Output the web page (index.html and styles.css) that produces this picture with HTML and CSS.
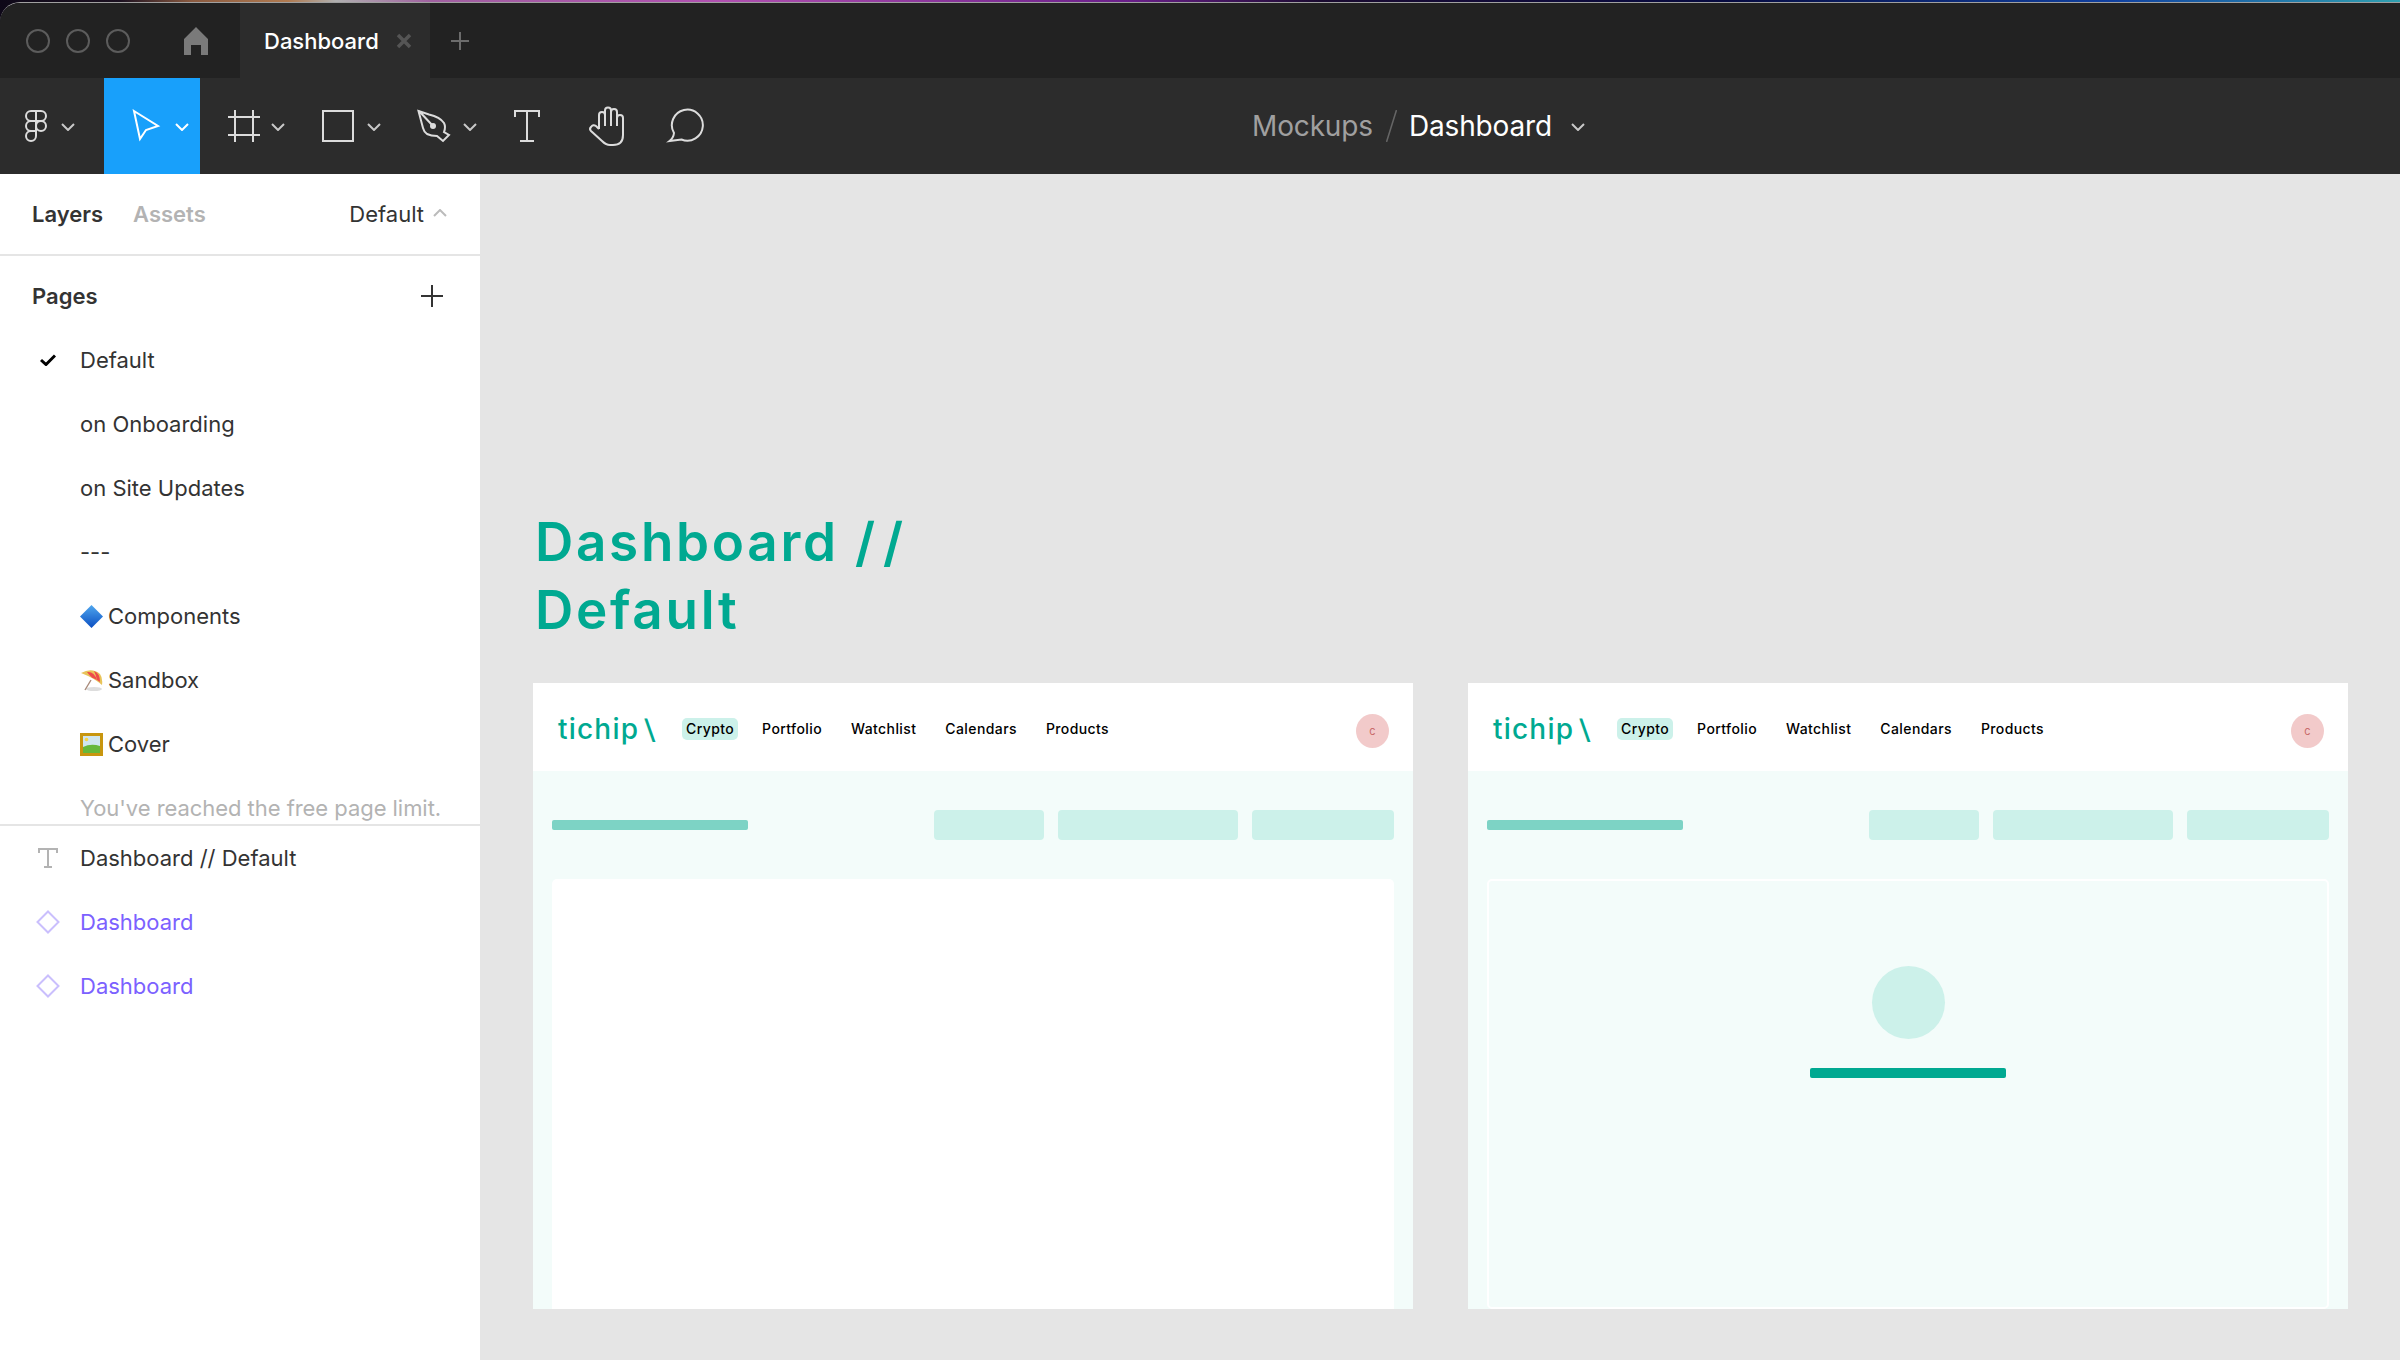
FILE: index.html
```html
<!DOCTYPE html>
<html lang="en">
<head>
    <meta charset="UTF-8">
    <title>Dashboard</title>
    <link rel="stylesheet" href="styles.css">
</head>
<body>
    <div class="app">
        <div class="tabbar">
            <div class="traffic"><span></span><span></span><span></span></div>
            <svg class="home" width="24" height="28" viewBox="0 0 24 28"><path d="M12 0 L24 12 V28 H17 V18 H7 V28 H0 V12 Z"/></svg>
            <div class="tab">
                <span class="tab-name">Dashboard</span>
                <svg class="tab-close" width="16" height="16" viewBox="0 0 16 16"><path d="M2 2 L14 14 M14 2 L2 14"/></svg>
            </div>
            <svg class="tab-add" width="18" height="18" viewBox="0 0 18 18"><path d="M9 0 V18 M0 9 H18"/></svg>
        </div>

        <div class="toolbar">
            <div class="tool-menu">
                <svg class="ico" width="22" height="32" viewBox="0 0 22 32">
                    <path d="M11 1 H6 a5 5 0 0 0 0 10 H11 Z M11 1 H16 a5 5 0 0 1 0 10 H11 M11 11 H6 a5 5 0 0 0 0 10 H11 Z M6 21 H11 V26 a5 5 0 1 1 -5 -5 Z"/>
                    <circle cx="16" cy="16" r="5"/>
                </svg>
                <svg class="chev" width="14" height="8" viewBox="0 0 14 8"><path d="M1 1 L7 7 L13 1"/></svg>
            </div>
            <div class="tool-select">
                <svg class="ico" width="30" height="34" viewBox="0 0 30 34"><path d="M3 2 L27 17 L15 21 L9 30 Z"/></svg>
                <svg class="chev" width="14" height="8" viewBox="0 0 14 8"><path d="M1 1 L7 7 L13 1"/></svg>
            </div>
            <div class="tool">
                <svg class="ico" width="40" height="40" viewBox="0 0 40 40"><path d="M11 4 V36 M29 4 V36 M4 11 H36 M4 29 H36"/></svg>
                <svg class="chev" width="14" height="8" viewBox="0 0 14 8"><path d="M1 1 L7 7 L13 1"/></svg>
            </div>
            <div class="tool">
                <svg class="ico" width="40" height="40" viewBox="0 0 40 40"><rect x="3" y="5" width="30" height="30"/></svg>
                <svg class="chev" width="14" height="8" viewBox="0 0 14 8"><path d="M1 1 L7 7 L13 1"/></svg>
            </div>
            <div class="tool">
                <svg class="ico" width="40" height="40" viewBox="0 0 40 40">
                    <path d="M2.5 5 L13 8.5 Q24 11 28 17 Q30 21 28 26 L33 29 L27 35 L21 30 Q15 30 11 28 Q8 26 7 22 Z M3 5 L17 20"/>
                    <circle class="dot" cx="17" cy="20" r="3"/>
                </svg>
                <svg class="chev" width="14" height="8" viewBox="0 0 14 8"><path d="M1 1 L7 7 L13 1"/></svg>
            </div>
            <div class="tool-singles">
                <svg class="ico" width="40" height="40" viewBox="0 0 40 40"><path d="M7 11 V5 H31 V11 M19 5 V35 M12 35 H26"/></svg>
                <svg class="ico" width="40" height="40" viewBox="0 0 40 40"><path d="M12 23 V9 a3 3 0 0 1 6 0 V4.5 a3 3 0 0 1 6 0 V6 a3 3 0 0 1 6 0 V12 a3 3 0 0 1 6 0 V29 Q36 39 26 39 H23 Q19 39 15 35 L4 25 Q2 23 4 21 Q6 18 9 20 L12 23 M18 9 V20 M24 5 V20 M30 6 V20"/></svg>
                <svg class="ico" width="40" height="40" viewBox="0 0 40 40"><path d="M8 27 A15.5 15.5 0 1 1 15.5 33.5 L3.5 35 Q7.5 32 8 27 Z"/></svg>
            </div>
            <div class="crumbs">
                <span class="crumb-team">Mockups</span>
                <svg class="crumb-slash" width="11" height="32" viewBox="0 0 11 32"><path d="M10.5 0 L0.5 32"/></svg>
                <span class="crumb-file">Dashboard</span>
                <svg class="chev" width="14" height="8" viewBox="0 0 14 8"><path d="M1 1 L7 7 L13 1"/></svg>
            </div>
        </div>

        <div class="workspace">
            <aside class="sidebar">
                <div class="side-tabs">
                    <span class="side-tab">Layers</span>
                    <span class="side-tab muted">Assets</span>
                    <span class="side-page">Default</span>
                    <svg class="side-chev" width="14" height="8" viewBox="0 0 14 8"><path d="M1 7 L7 1 L13 7"/></svg>
                </div>
                <div class="pages">
                    <div class="pages-head">
                        <span>Pages</span>
                        <svg width="22" height="22" viewBox="0 0 22 22"><path d="M11 0 V22 M0 11 H22"/></svg>
                    </div>
                    <div class="row">
                        <span class="row-icon"><svg class="check" width="16" height="12" viewBox="0 0 16 12"><path d="M1 6 L6 10.5 L15 1.5"/></svg></span>
                        Default
                    </div>
                    <div class="row"><span class="row-icon"></span>on Onboarding</div>
                    <div class="row"><span class="row-icon"></span>on Site Updates</div>
                    <div class="row"><span class="row-icon"></span>---</div>
                    <div class="row">
                        <span class="row-icon"></span>
                        <svg class="emoji" width="23" height="23" viewBox="0 0 23 23">
                            <defs><linearGradient id="blue" x1="0" y1="0" x2="0" y2="1"><stop offset="0" stop-color="#4fa6ee"/><stop offset="1" stop-color="#0b4fc2"/></linearGradient></defs>
                            <path d="M11.5 0 L23 11.5 L11.5 23 L0 11.5 Z" fill="url(#blue)"/>
                        </svg>
                        Components
                    </div>
                    <div class="row">
                        <span class="row-icon"></span>
                        <svg class="emoji" width="23" height="23" viewBox="0 0 23 23">
                            <ellipse cx="14" cy="20" rx="8" ry="2" fill="#ddd"/>
                            <path d="M11 11 L5 21" stroke="#a98a7a" stroke-width="1.4"/>
                            <path d="M1 4 Q12 -2 20 5 Q23 9 22 16 Q14 9 1 4 Z" fill="#e8c45a"/>
                            <path d="M7 3 Q14 2 17 11 L12 8.5 Q9 6 7 3 Z" fill="#ee4b4b"/>
                            <path d="M14 2 Q20 4 20 13 L17 11 Q16 6 14 2 Z" fill="#ee4b4b"/>
                        </svg>
                        Sandbox
                    </div>
                    <div class="row">
                        <span class="row-icon"></span>
                        <svg class="emoji" width="23" height="23" viewBox="0 0 23 23">
                            <rect width="23" height="23" fill="#c8960f"/>
                            <rect x="3" y="3" width="17" height="17" fill="#cfe6ef"/>
                            <path d="M3 14 Q11 10 20 13 V20 H3 Z" fill="#66b83a"/>
                            <circle cx="6.5" cy="6.5" r="1.8" fill="#f6d64a"/>
                        </svg>
                        Cover
                    </div>
                    <div class="row limit"><span class="row-icon"></span>You've reached the free page limit.</div>
                </div>
                <div class="layers">
                    <div class="row">
                        <span class="row-icon"><svg class="type-ico" width="20" height="20" viewBox="0 0 20 20"><path d="M1 5 V1 H19 V5 M10 1 V19 M6 19 H14"/></svg></span>
                        Dashboard // Default
                    </div>
                    <div class="row comp">
                        <span class="row-icon"><svg class="comp-ico" width="24" height="24" viewBox="0 0 24 24"><path d="M12 1.5 L22.5 12 L12 22.5 L1.5 12 Z"/></svg></span>
                        Dashboard
                    </div>
                    <div class="row comp">
                        <span class="row-icon"><svg class="comp-ico" width="24" height="24" viewBox="0 0 24 24"><path d="M12 1.5 L22.5 12 L12 22.5 L1.5 12 Z"/></svg></span>
                        Dashboard
                    </div>
                </div>
            </aside>

            <main class="canvas">
                <h1 class="canvas-title">Dashboard <span class="title-slashes">//</span><br>Default</h1>
                <div class="frames">
                    <section class="frame">
                        <header class="frame-head">
                            <div class="logo"><span>tichip</span><span class="logo-slash">\</span></div>
                            <nav class="nav">
                                <a class="active">Crypto</a>
                                <a>Portfolio</a>
                                <a>Watchlist</a>
                                <a>Calendars</a>
                                <a>Products</a>
                            </nav>
                            <span class="avatar">c</span>
                        </header>
                        <div class="frame-body">
                            <div class="frame-tools">
                                <div class="bar bar-title"></div>
                                <div class="btn btn-s"></div>
                                <div class="btn btn-l"></div>
                                <div class="btn btn-m"></div>
                            </div>
                            <div class="card"></div>
                        </div>
                    </section>
                    <section class="frame">
                        <header class="frame-head">
                            <div class="logo"><span>tichip</span><span class="logo-slash">\</span></div>
                            <nav class="nav">
                                <a class="active">Crypto</a>
                                <a>Portfolio</a>
                                <a>Watchlist</a>
                                <a>Calendars</a>
                                <a>Products</a>
                            </nav>
                            <span class="avatar">c</span>
                        </header>
                        <div class="frame-body">
                            <div class="frame-tools">
                                <div class="bar bar-title"></div>
                                <div class="btn btn-s"></div>
                                <div class="btn btn-l"></div>
                                <div class="btn btn-m"></div>
                            </div>
                            <div class="card card-empty">
                                <div class="empty-circle"></div>
                                <div class="bar bar-empty"></div>
                            </div>
                        </div>
                    </section>
                </div>
            </main>
        </div>
    </div>
</body>
</html>
```

FILE: styles.css
```css
* {
    box-sizing: border-box;
}
html, body {
    margin: 0;
    height: 100%;
    overflow: hidden;
}
body {
    font-family: Inter, "Noto Sans", sans-serif;
    background: linear-gradient(90deg, #0e0818 0, #1b1020 5%, #8a5a40 8%, #b07a50 12%, #b0b0b0 14%, #a060a0 18%, #b050b0 30%, #6a1f8a 47%, #1a0a30 55%, #060a40 72%, #1040a0 88%, #30a0b0 100%);
}
svg {
    display: block;
    flex: none;
}

.app {
    margin-top: 2px;
    height: calc(100% - 2px);
    display: flex;
    flex-direction: column;
    border-top: 1px solid #a0a0a0;
    border-top-left-radius: 20px;
    overflow: hidden;
}

/* window tabs */
.tabbar {
    height: 75px;
    flex: none;
    display: flex;
    align-items: center;
    background: #222;
}
.traffic {
    display: flex;
    gap: 16px;
    padding-left: 26px;
}
.traffic span {
    width: 24px;
    height: 24px;
    border: 2px solid #5c5c5c;
    border-radius: 50%;
}
.home {
    margin-left: 54px;
    fill: #7a7a7a;
}
.tab {
    margin-left: 32px;
    width: 190px;
    height: 100%;
    padding-left: 24px;
    display: flex;
    align-items: center;
    gap: 17px;
    background: #2c2c2c;
}
.tab-name {
    font-size: 22px;
    font-weight: 500;
    color: #fff;
}
.tab-close {
    fill: none;
    stroke: #555;
    stroke-width: 3.5;
}
.tab-add {
    margin-left: 21px;
    fill: none;
    stroke: #6c6c6c;
    stroke-width: 2;
}

/* tools */
.toolbar {
    height: 96px;
    flex: none;
    display: flex;
    align-items: center;
    background: #2c2c2c;
}
.ico {
    fill: none;
    stroke: #dcdcdc;
    stroke-width: 2;
}
.ico .dot {
    fill: #dcdcdc;
    stroke: none;
}
.chev {
    margin-top: 2px;
    fill: none;
    stroke: #c8c8c8;
    stroke-width: 2;
}
.tool-menu {
    width: 104px;
    padding-left: 25px;
    display: flex;
    align-items: center;
    gap: 14px;
}
.tool-select {
    width: 96px;
    height: 100%;
    padding-left: 27px;
    display: flex;
    align-items: center;
    gap: 14px;
    background: #18a0fb;
}
.tool-select .ico, .tool-select .chev {
    stroke: #fff;
}
.tool {
    width: 96px;
    padding-left: 24px;
    display: flex;
    align-items: center;
    gap: 7px;
}
.tool-singles {
    margin-left: 20px;
    display: flex;
    gap: 39px;
}
.crumbs {
    margin-left: 546px;
    display: flex;
    align-items: center;
    font-size: 28px;
    letter-spacing: -0.15px;
}
.crumb-team {
    color: #a0a0a0;
}
.crumb-slash {
    margin: 0 12px 0 13px;
    fill: none;
    stroke: #666;
    stroke-width: 1.5;
}
.crumb-file {
    color: #fff;
    margin-right: 19px;
}

.workspace {
    flex: 1;
    display: flex;
    min-height: 0;
}

/* left panel */
.sidebar {
    width: 480px;
    flex: none;
    background: #fff;
    font-size: 22px;
    color: #333;
}
.side-tabs {
    height: 82px;
    padding: 0 33px 0 32px;
    display: flex;
    align-items: center;
    border-bottom: 2px solid #e5e5e5;
}
.side-tab {
    font-weight: 600;
    margin-right: 30px;
}
.side-tab.muted {
    color: #b3b3b3;
}
.side-page {
    margin-left: auto;
    margin-right: 9px;
}
.side-chev {
    fill: none;
    stroke: #bbb;
    stroke-width: 2;
    margin-bottom: 2px;
}
.pages {
    height: 570px;
    overflow: hidden;
    padding-top: 8px;
    border-bottom: 2px solid #e5e5e5;
}
.pages-head {
    height: 64px;
    padding: 0 37px 0 32px;
    display: flex;
    align-items: center;
    justify-content: space-between;
    font-weight: 600;
}
.pages-head svg {
    fill: none;
    stroke: #333;
    stroke-width: 2;
}
.row {
    height: 64px;
    padding-left: 24px;
    display: flex;
    align-items: center;
}
.row-icon {
    width: 48px;
    margin-right: 8px;
    flex: none;
    display: flex;
    justify-content: center;
}
.emoji {
    margin-right: 5px;
}
.check {
    fill: none;
    stroke: #000;
    stroke-width: 3;
}
.limit {
    color: #b3b3b3;
    letter-spacing: -0.05px;
}
.type-ico {
    fill: none;
    stroke: #b3b3b3;
    stroke-width: 2;
}
.comp {
    color: #7b61ff;
}
.comp-ico {
    fill: none;
    stroke: #cabffd;
    stroke-width: 2;
}

/* canvas */
.canvas {
    flex: 1;
    background: #e5e5e5;
    padding: 334px 0 0 53px;
}
.canvas-title {
    margin: 0 0 39px 2px;
    font-size: 53px;
    line-height: 68px;
    font-weight: 600;
    letter-spacing: 2.7px;
    color: #00a991;
}
.title-slashes {
    letter-spacing: 8px;
}
.frames {
    display: flex;
    gap: 55px;
}
.frame {
    width: 880px;
    height: 626px;
    display: flex;
    flex-direction: column;
    background: #fff;
}
.frame-head {
    height: 88px;
    flex: none;
    padding: 4px 24px 0 25px;
    display: flex;
    align-items: center;
}
.logo {
    width: 124px;
    display: flex;
    align-items: baseline;
    font-size: 28px;
    font-weight: 500;
    letter-spacing: 1.2px;
    color: #00a991;
}
.logo-slash {
    margin-left: 6px;
    font-size: 27px;
    font-weight: 400;
    letter-spacing: 0;
    transform: scaleX(1.3);
}
.nav {
    display: flex;
    gap: 19px;
}
.nav a {
    height: 22px;
    padding: 0 5px;
    border-radius: 5px;
    font-size: 14px;
    font-weight: 500;
    line-height: 22px;
    letter-spacing: 0.4px;
    color: #000;
}
.nav a.active {
    padding: 0 4px;
    background: #ccf1ea;
}
.avatar {
    margin: 4px 0 0 auto;
    width: 33px;
    height: 34px;
    border-radius: 50%;
    display: flex;
    align-items: center;
    justify-content: center;
    font-size: 11px;
    color: #c96a6a;
    background: #f2caca;
}
.frame-body {
    flex: 1;
    min-height: 0;
    padding: 39px 19px 0;
    display: flex;
    flex-direction: column;
    background: #f3fcfa;
}
.frame-tools {
    display: flex;
    align-items: center;
    gap: 14px;
}
.bar {
    width: 196px;
    height: 10px;
    border-radius: 2px;
}
.bar-title {
    margin-right: auto;
    background: #7dd3c5;
}
.btn {
    height: 30px;
    border-radius: 4px;
    background: #ccf1ea;
}
.btn-s {
    width: 110px;
}
.btn-l {
    width: 180px;
}
.btn-m {
    width: 142px;
}
.card {
    flex: 1;
    margin-top: 39px;
    border-radius: 5px 5px 0 0;
    background: #fff;
}
.card-empty {
    padding-top: 85px;
    display: flex;
    flex-direction: column;
    align-items: center;
    background: transparent;
    border: 2px solid #fff;
    border-radius: 5px;
}
.empty-circle {
    width: 73px;
    height: 73px;
    border-radius: 50%;
    background: #ccf1ea;
}
.bar-empty {
    margin-top: 29px;
    background: #00a991;
}
```
